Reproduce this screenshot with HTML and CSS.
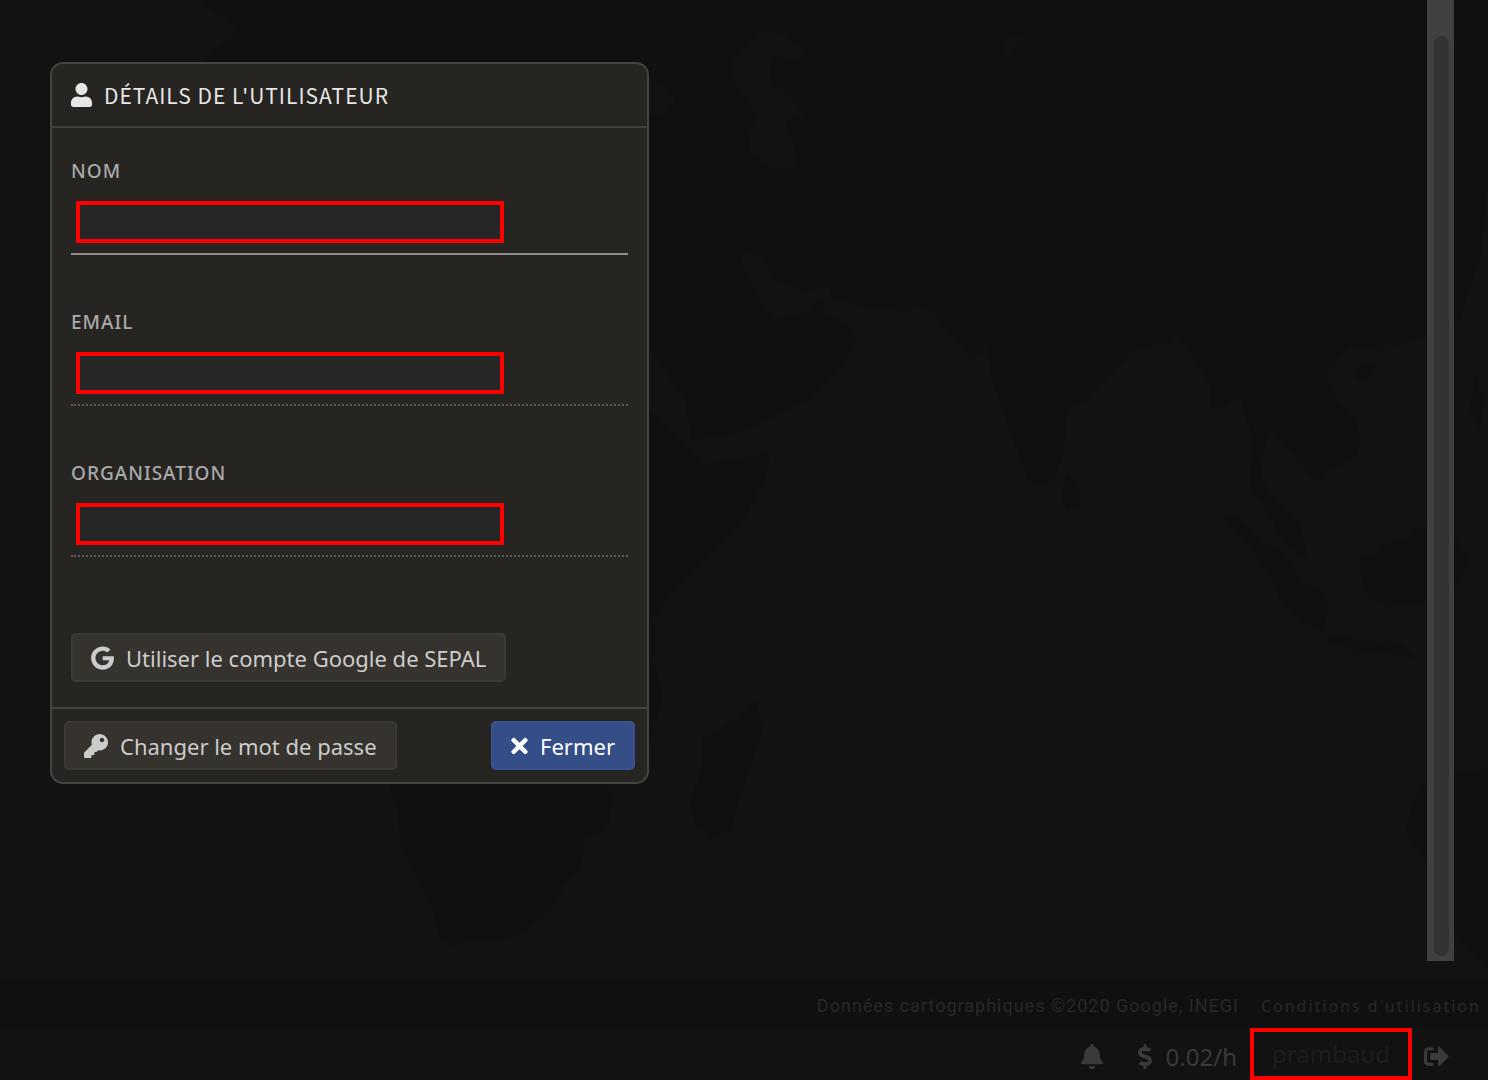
FILE: index.html
```html
<!DOCTYPE html>
<html lang="fr">
<head>
<meta charset="utf-8">
<meta name="viewport" content="width=device-width, initial-scale=1">
<title>SEPAL</title>
<link rel="stylesheet" href="styles.css">
</head>
<body>
<main class="map">
  <svg class="map-land" viewBox="0 0 1488 980" preserveAspectRatio="xMidYMid slice" aria-hidden="true">
    <path class="land" d="M200 0H1488V180L1480 260 1468 290 1460 320 1425 335 1400 345 1350 347 1325 375 1338 400 1355 420 1360 440 1358 455 1330 470 1317 482 1297 460 1275 434 1268 434 1260 460 1262 480 1275 500 1300 525 1307 558 1285 545 1272 520 1250 487 1253 440 1240 395 1225 408 1210 408 1211 385 1188 350 1178 335 1165 343 1135 348 1115 370 1085 400 1066 412 1064 450 1055 478 1038 487 1028 480 1010 430 992 380 987 342 978 355 965 352 950 335 938 318 925 305 873 307 833 300 828 285 805 291 785 284 772 275 760 250 745 250 740 262 760 300 775 320 800 315 822 298 826 315 847 323 856 340 838 370 810 398 780 413 745 430 710 438 692 441 685 400 665 370 650 350 600 250 560 250 650 412 680 440 687 450 705 465 770 452 765 480 740 525 700 565 665 600 655 620 655 660 662 700 650 740 606 784 612 800 608 825 585 840 580 870 565 885 550 910 525 932 500 939 475 938 452 946 440 940 435 915 422 885 410 865 400 840 398 805 388 784 340 600 150 560 150 200 200 64 240 30Z"/>
    <path class="land" d="M755 700L762 730 745 780 730 830 710 838 695 825 690 800 702 770 702 740 720 730 740 715ZM1067 472L1080 490 1080 505 1068 511 1062 498ZM1360 363L1375 365 1370 378 1362 382 1354 375ZM1222 517L1240 518 1260 540 1285 555 1300 580 1320 590 1328 600 1325 628 1310 626 1280 600 1270 575 1250 545ZM1328 633L1355 640 1400 643 1415 658 1380 653 1345 648 1327 640ZM1440 515L1400 541 1380 545 1378 553 1360 555 1360 575 1370 600 1427 605 1450 600 1470 560ZM1418 790L1440 775 1488 770V965L1460 940 1425 860 1405 830ZM1475 375L1484 400 1480 430 1470 410Z"/>
    <path class="water" d="M765 30L790 35 793 45 807 52 800 60 775 55 770 65 770 80 785 92 805 115 785 122 795 150 798 168 775 170 750 155 748 130 758 118 735 85 730 65 740 50ZM650 78L672 92 675 102 660 115 640 112ZM1000 52L1010 35 1050 36 1020 38 1008 55Z"/>
  </svg>

  <form class="panel">
    <h1 class="panel-title">
      <svg class="icon" viewBox="0 0 448 512" width="21" height="24" aria-hidden="true"><path d="M224 256c70.700 0 128-57.300 128-128S294.700 0 224 0 96 57.300 96 128s57.300 128 128 128zm89.600 32h-16.700c-22.200 10.200-46.900 16-72.900 16s-50.600-5.800-72.900-16h-16.700C60.200 288 0 348.200 0 422.400V464c0 26.500 21.500 48 48 48h352c26.500 0 48-21.500 48-48v-41.600c0-74.200-60.200-134.400-134.400-134.400z"/></svg>
      <span>DÉTAILS DE L'UTILISATEUR</span>
    </h1>
    <div class="panel-body">
      <div class="field field-active">
        <label for="name">NOM</label>
        <input id="name" type="text">
      </div>
      <div class="field">
        <label for="email">EMAIL</label>
        <input id="email" type="email">
      </div>
      <div class="field">
        <label for="organization">ORGANISATION</label>
        <input id="organization" type="text">
      </div>
      <button class="button" type="button">
        <svg class="icon" viewBox="0 0 488 512" width="23" height="24" aria-hidden="true"><path d="M488 261.800C488 403.300 391.100 504 248 504 110.800 504 0 393.200 0 256S110.800 8 248 8c66.800 0 123 24.500 166.300 64.900l-67.500 64.900C258.500 52.600 94.300 116.600 94.300 256c0 86.500 69.100 156.600 153.700 156.600 98.200 0 135-70.400 140.800-106.900H248v-85.300h236.100c2.300 12.700 3.900 24.900 3.900 41.400z"/></svg>
        <span>Utiliser le compte Google de SEPAL</span>
      </button>
    </div>
    <div class="panel-actions">
      <button class="button" type="button">
        <svg class="icon" viewBox="0 0 512 512" width="24" height="24" aria-hidden="true"><path d="M512 176.001C512 273.203 433.202 352 336 352c-11.220 0-22.190-1.062-32.827-3.069l-24.012 27.014A23.999 23.999 0 0 1 261.223 384H224v40c0 13.255-10.745 24-24 24h-40v40c0 13.255-10.745 24-24 24H24c-13.255 0-24-10.745-24-24v-78.059c0-6.365 2.529-12.470 7.029-16.971l161.802-161.802C163.108 213.814 160 195.271 160 176 160 78.798 238.797.001 335.999 0 433.488-.001 512 78.511 512 176.001zM336 128c0 26.510 21.490 48 48 48s48-21.490 48-48-21.490-48-48-48-48 21.490-48 48z"/></svg>
        <span>Changer le mot de passe</span>
      </button>
      <button class="button button-primary" type="button">
        <svg class="icon" viewBox="0 0 352 512" width="17" height="24" aria-hidden="true"><path d="M242.720 256l100.070-100.070c12.280-12.280 12.280-32.190 0-44.480l-22.240-22.240c-12.280-12.280-32.190-12.280-44.480 0L176 189.280 75.930 89.210c-12.280-12.280-32.190-12.280-44.480 0L9.210 111.450c-12.280 12.280-12.280 32.190 0 44.480L109.280 256 9.210 356.070c-12.280 12.280-12.280 32.190 0 44.480l22.240 22.240c12.280 12.280 32.200 12.280 44.480 0L176 322.720l100.070 100.070c12.280 12.280 32.200 12.280 44.480 0l22.240-22.240c12.280-12.280 12.280-32.190 0-44.480L242.720 256z"/></svg>
        <span>Fermer</span>
      </button>
    </div>
  </form>

  <div class="scroll-track"><div class="scroll-thumb"></div></div>
</main>

<div class="attribution">
  <span class="map-data">Données cartographiques ©2020 Google, INEGI</span>
  <a href="#terms">Conditions d'utilisation</a>
</div>

<footer class="status">
  <button class="status-item" type="button" aria-label="Notifications">
    <svg class="icon" viewBox="0 0 448 512" width="22" height="25" aria-hidden="true"><path d="M224 512c35.320 0 63.970-28.650 63.970-64H160.030c0 35.350 28.650 64 63.970 64zm215.390-149.710c-19.320-20.760-55.470-51.990-55.470-154.290 0-77.700-54.480-139.900-127.940-155.160V32c0-17.670-14.320-32-31.980-32s-31.980 14.330-31.980 32v20.840C118.560 68.100 64.080 130.300 64.080 208c0 102.300-36.150 133.530-55.470 154.290-6 6.450-8.660 14.160-8.610 21.710.110 16.400 12.980 32 32.100 32h383.800c19.120 0 32-15.600 32.100-32 .050-7.550-2.610-15.270-8.610-21.710z"/></svg>
  </button>
  <button class="status-item budget" type="button">
    <svg class="icon" viewBox="0 0 288 512" width="14" height="25" aria-hidden="true"><path d="M209.200 233.400l-108-31.600C88.700 198.200 80 186.500 80 173.500c0-16.300 13.200-29.500 29.500-29.500h66.300c12.200 0 24.200 3.700 34.200 10.500 6.100 4.100 14.300 3.100 19.500-2l34.800-34c7.100-6.900 6.100-18.400-1.800-24.500C238 74.800 207.400 64.100 176 64V16c0-8.800-7.200-16-16-16h-32c-8.800 0-16 7.200-16 16v48h-2.500C45.800 64-5.400 118.700.500 183.600c4.200 46.100 39.400 83.600 83.800 96.600l102.500 30c12.500 3.700 21.200 15.300 21.200 28.300 0 16.300-13.200 29.500-29.500 29.500h-66.300C100 368 88 364.300 78 357.500c-6.100-4.100-14.300-3.100-19.500 2l-34.800 34c-7.100 6.900-6.100 18.400 1.800 24.500 24.500 19.200 55.100 29.900 86.500 30v48c0 8.800 7.200 16 16 16h32c8.800 0 16-7.200 16-16v-48.200c46.600-.900 90.300-28.600 105.700-72.700 21.500-61.600-14.600-124.800-72.500-141.700z"/></svg>
    <span>0.02/h</span>
  </button>
  <button class="status-item user" type="button">prambaud</button>
  <button class="status-item" type="button" aria-label="Se déconnecter">
    <svg class="icon" viewBox="0 0 512 512" width="25" height="25" aria-hidden="true"><path d="M497 273L329 441c-15 15-41 4.500-41-17v-96H152c-13.300 0-24-10.700-24-24v-96c0-13.300 10.700-24 24-24h136V88c0-21.400 25.900-32 41-17l168 168c9.300 9.400 9.300 24.600 0 34zM192 436v-40c0-6.600-5.400-12-12-12H96c-17.700 0-32-14.300-32-32V160c0-17.700 14.300-32 32-32h84c6.600 0 12-5.400 12-12V76c0-6.600-5.400-12-12-12H96c-53 0-96 43-96 96v192c0 53 43 96 96 96h84c6.600 0 12-5.400 12-12z"/></svg>
  </button>
</footer>
</body>
</html>
```
FILE: styles.css
```css
*,
*::before,
*::after {
  box-sizing: border-box;
}

body {
  margin: 0;
  min-height: 100vh;
  display: flex;
  flex-direction: column;
  background: #121212;
  color: #ccc;
  font-family: "Noto Sans", "Open Sans", sans-serif;
}

button {
  font: inherit;
  color: inherit;
  cursor: pointer;
}

.icon {
  flex: none;
  fill: currentColor;
}

/* Map */
.map {
  flex: 1;
  position: relative;
  display: flex;
  justify-content: space-between;
  align-items: flex-start;
  padding-left: 50px;
  padding-right: 34px;
}

.map-land {
  position: absolute;
  inset: 0;
  width: 100%;
  height: 100%;
}

.land {
  fill: #101010;
}

.water {
  fill: #121212;
}

.scroll-track {
  position: relative;
  align-self: stretch;
  display: flex;
  width: 27px;
  margin-bottom: 19px;
  padding: 36px 5px 5px 7px;
  background: #404040;
}

.scroll-thumb {
  flex: 1;
  border-radius: 8px;
  background: #333;
}

/* User details panel */
.panel {
  position: relative;
  width: 100%;
  max-width: 599px;
  margin: 62px 24px 62px 0;
  border: 2px solid #45443f;
  border-radius: 13px;
  background: #262521;
}

.panel-title {
  display: flex;
  align-items: center;
  gap: 12px;
  height: 64px;
  margin: 0;
  padding: 0 19px;
  border-bottom: 2px solid #403f3b;
  color: #e6e6e6;
  font-family: "Noto Sans CJK JP", sans-serif;
  font-size: 21px;
  font-weight: 400;
  line-height: 32px;
  letter-spacing: 1px;
}

.panel-body {
  padding: 31px 19px 25px;
}

.field {
  display: flex;
  flex-direction: column;
  align-items: flex-start;
  margin-bottom: 55px;
  border-bottom: 2px dotted #5c5b57;
}

.field:last-of-type {
  margin-bottom: 76px;
}

.field-active {
  border-bottom: 2px solid #8c8c88;
}

.field label {
  color: #aaa;
  font-size: 19px;
  font-weight: 500;
  line-height: 24px;
  letter-spacing: 1px;
}

.field input {
  width: 428px;
  max-width: 100%;
  height: 42px;
  margin: 18px 5px 10px;
  padding: 0 8px;
  border: 4px solid #f00;
  border-radius: 0;
  outline: 0;
  background: #262626;
  color: #ccc;
  font: inherit;
}

.button {
  display: flex;
  align-items: center;
  gap: 12px;
  height: 49px;
  padding: 0 18px;
  border: 2px solid #3b3a34;
  border-radius: 5px;
  background: #36332e;
  color: #ccc;
  font-size: 22px;
  line-height: 32px;
  white-space: nowrap;
}

.button-primary {
  border-color: #3a5390;
  background: #354e87;
  color: #fff;
}

.panel-actions {
  display: flex;
  justify-content: space-between;
  gap: 12px;
  padding: 12px;
  border-top: 2px solid #45443f;
}

/* Map attribution */
.attribution {
  display: flex;
  justify-content: flex-end;
  align-items: center;
  gap: 22px;
  height: 50px;
  padding: 2px 7px 0;
  background: #101010;
  color: #282828;
  font-size: 16px;
  line-height: 24px;
  letter-spacing: 2px;
  white-space: nowrap;
}

.map-data {
  font-family: Roboto, sans-serif;
  font-size: 18px;
  letter-spacing: 1px;
}

.attribution a {
  color: inherit;
  text-decoration: none;
}

/* Status bar */
.status {
  display: flex;
  justify-content: flex-end;
  align-items: center;
  height: 50px;
  padding: 2px 39px 0;
  border-top: 1px solid #161616;
  background: #121212;
  color: #3a3a3a;
  font-size: 24px;
  line-height: 32px;
}

.status-item {
  display: flex;
  align-items: center;
  justify-content: center;
  padding: 0;
  border: 0;
  background: none;
}

.budget {
  gap: 14px;
  margin: 0 13px 0 35px;
}

.user {
  align-self: stretch;
  width: 162px;
  margin: -5px 12px 0 0;
  border: 4px solid #f00;
  background: #121212;
  color: #1d1d1d;
}
```
